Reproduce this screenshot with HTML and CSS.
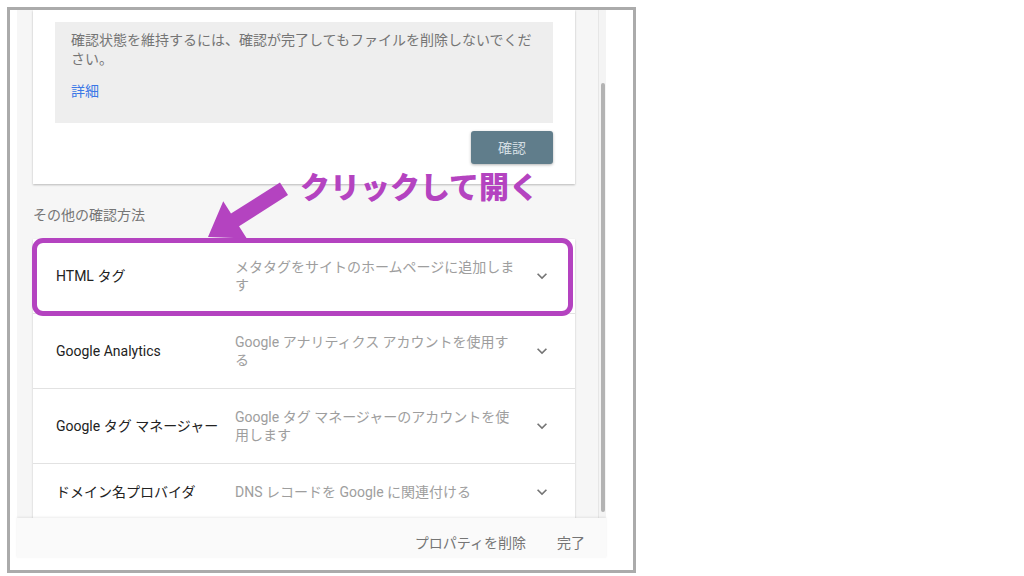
FILE: index.html
```html
<!DOCTYPE html>
<html lang="ja">
<head>
<meta charset="utf-8">
<title>確認方法</title>
<link rel="stylesheet" href="styles.css">
</head>
<body>
<div class="frame">
  <div class="dialog">
    <div class="scroll">
      <div class="content">
        <div class="card">
          <div class="note">
            <p class="note-text">確認状態を維持するには、確認が完了してもファイルを削除しないでください。</p>
            <a class="link">詳細</a>
          </div>
          <div class="actions"><button class="btn">確認</button></div>
        </div>
        <div class="label">その他の確認方法</div>
        <div class="list">
          <div class="row">
            <div class="title">HTML タグ</div>
            <div class="desc">メタタグをサイトのホームページに追加します</div>
            <div class="chev"><svg viewBox="0 0 24 24" width="20" height="20"><path d="M7.41 8.59 12 13.17l4.59-4.58L18 10l-6 6-6-6z" fill="#757575"/></svg></div>
            <div class="highlight"></div>
          </div>
          <div class="row">
            <div class="title">Google Analytics</div>
            <div class="desc">Google アナリティクス アカウントを使用する</div>
            <div class="chev"><svg viewBox="0 0 24 24" width="20" height="20"><path d="M7.41 8.59 12 13.17l4.59-4.58L18 10l-6 6-6-6z" fill="#757575"/></svg></div>
          </div>
          <div class="row">
            <div class="title">Google タグ マネージャー</div>
            <div class="desc">Google タグ マネージャーのアカウントを使用します</div>
            <div class="chev"><svg viewBox="0 0 24 24" width="20" height="20"><path d="M7.41 8.59 12 13.17l4.59-4.58L18 10l-6 6-6-6z" fill="#757575"/></svg></div>
          </div>
          <div class="row row-single">
            <div class="title">ドメイン名プロバイダ</div>
            <div class="desc">DNS レコードを Google に関連付ける</div>
            <div class="chev"><svg viewBox="0 0 24 24" width="20" height="20"><path d="M7.41 8.59 12 13.17l4.59-4.58L18 10l-6 6-6-6z" fill="#757575"/></svg></div>
          </div>
        </div>
      </div>
      <div class="scrollbar"><div class="thumb"></div></div>
    </div>
    <div class="footer"><span>プロパティを削除</span><span>完了</span></div>
  </div>
</div>
<svg class="arrow" viewBox="0 0 1024 576" width="1024" height="576">
  <polygon transform="translate(208,237) rotate(147.6)" points="0,0 -32,-22 -32,-7.5 -90,-7.5 -90,7.5 -32,7.5 -32,22" fill="#b443c0"/>
</svg>
<div class="callout">クリックして開く</div>
</body>
</html>
```
FILE: styles.css
```css
* { box-sizing: border-box; }

body {
  margin: 0;
  width: 1024px;
  height: 576px;
  overflow: hidden;
  position: relative;
  background: #ffffff;
  font-family: Roboto, "Noto Sans CJK JP", sans-serif;
}

.frame {
  margin: 7px 0 0 7px;
  width: 629px;
  height: 566px;
  border: 3px solid #ababab;
  padding: 0 27px 12px 7px;
  display: flex;
}

.dialog {
  flex: 1;
  display: flex;
  flex-direction: column;
  background: #f6f6f6;
  min-width: 0;
}

.scroll {
  flex: 1;
  display: flex;
  overflow: hidden;
  min-height: 0;
}

.content {
  flex: 1;
  padding: 0 23px 0 16px;
}

.scrollbar {
  width: 8px;
  flex-shrink: 0;
  border-left: 1px solid #e6e6e6;
  background: #f4f4f4;
  padding-top: 73px;
}

.thumb {
  width: 4px;
  height: 429px;
  margin-left: 2px;
  border-radius: 2px;
  background: #b3b3b3;
}

.card {
  background: #ffffff;
  box-shadow: 0 1px 2px rgba(0, 0, 0, 0.25);
  padding: 12px 22px 20px;
}

.note {
  background: #eeeeee;
  padding: 9px 16px 23px;
}

.note-text {
  margin: 0;
  font-size: 14px;
  line-height: 18.5px;
  color: #757575;
}

.link {
  display: block;
  margin-top: 13.5px;
  font-size: 14px;
  line-height: 18px;
  color: #3b78e7;
}

.actions {
  display: flex;
  justify-content: flex-end;
  margin-top: 8px;
}

.btn {
  width: 82px;
  height: 33px;
  border: none;
  border-radius: 3px;
  background: #607d8b;
  color: #d3dde2;
  font-family: Roboto, "Noto Sans CJK JP", sans-serif;
  font-size: 14px;
  box-shadow: 0 1px 3px rgba(0, 0, 0, 0.3);
}

.label {
  margin: 22px 0 15px;
  font-size: 14px;
  line-height: 18px;
  color: #757575;
}

.list {
  background: #ffffff;
  box-shadow: 0 1px 2px rgba(0, 0, 0, 0.2);
}

.row {
  position: relative;
  display: flex;
  align-items: center;
  padding: 19px 21px 19px 23px;
  border-bottom: 1px solid #e2e2e2;
}

.row-single {
  padding-top: 16px;
}

.title {
  width: 179px;
  flex-shrink: 0;
  font-size: 14px;
  line-height: 18px;
  font-weight: 400;
  color: #222222;
}

.desc {
  width: 284px;
  flex-shrink: 0;
  font-size: 14px;
  line-height: 18px;
  color: #9e9e9e;
}

.chev {
  margin-left: auto;
  width: 24px;
  height: 24px;
  display: flex;
  align-items: center;
  justify-content: center;
}

.highlight {
  position: absolute;
  left: -1px;
  top: -1px;
  right: 2px;
  bottom: -3px;
  border: 5px solid #b443c0;
  border-radius: 11px;
}

.footer {
  height: 40px;
  flex-shrink: 0;
  position: relative;
  display: flex;
  justify-content: flex-end;
  align-items: flex-start;
  gap: 31px;
  padding: 16px 21px 0 0;
  background: #fafafa;
  box-shadow: 0 -1px 2px rgba(0, 0, 0, 0.08);
  font-size: 14px;
  line-height: 18px;
  color: #757575;
}

.arrow {
  position: absolute;
  left: 0;
  top: 0;
  pointer-events: none;
}

.callout {
  position: absolute;
  left: 300px;
  top: 169px;
  font-family: "Noto Sans CJK JP", sans-serif;
  font-size: 30px;
  line-height: 32px;
  font-weight: 900;
  color: #b443c0;
  white-space: nowrap;
}
```
